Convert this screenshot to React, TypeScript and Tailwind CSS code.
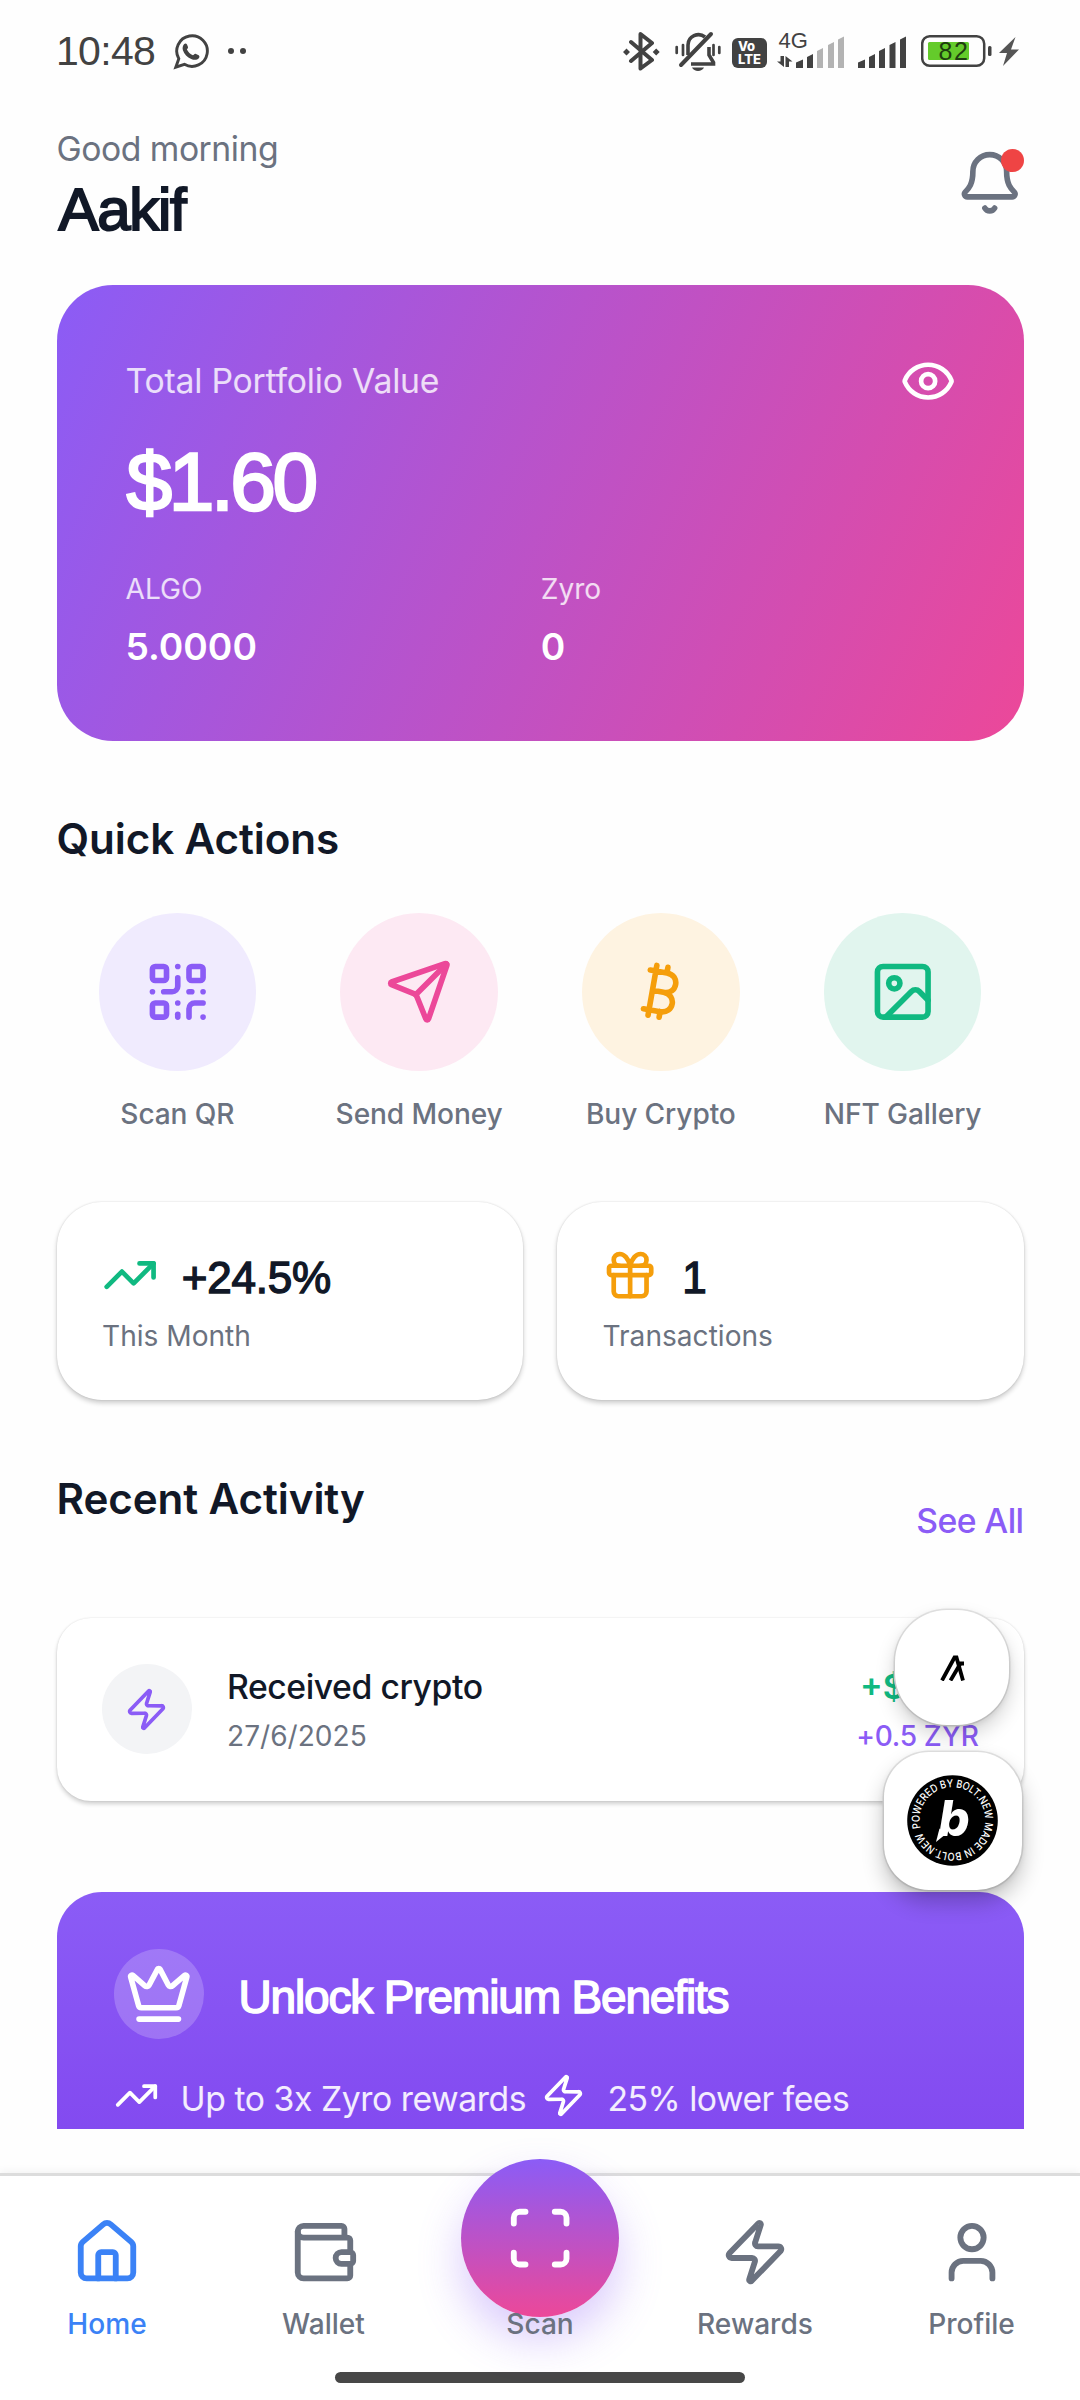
import React from 'react';
import {
  Bell,
  Bitcoin,
  Crown,
  Eye,
  Gift,
  House,
  Image,
  QrCode,
  Scan,
  Send,
  TrendingUp,
  User,
  Wallet,
  Zap,
} from 'lucide-react';

const quickActions = [
  { label: 'Scan QR', Icon: QrCode, bg: 'bg-[#f0ebfe]', color: '#8b5cf6' },
  { label: 'Send Money', Icon: Send, bg: 'bg-[#fde9f3]', color: '#ec4899' },
  { label: 'Buy Crypto', Icon: Bitcoin, bg: 'bg-[#fef3e1]', color: '#f59e0b' },
  { label: 'NFT Gallery', Icon: Image, bg: 'bg-[#e1f5ee]', color: '#10b981' },
];

const StatusBar = () => {
  return (
    <div className="flex h-[102px] shrink-0 items-center justify-between pl-[56px] pr-[61px] text-[#424242]">
      <div className="flex items-center">
        <span className="w-[116px] font-['Liberation_Sans',sans-serif] text-[41px] leading-none tracking-[-0.7px]">10:48</span>
        <svg width="38" height="38" viewBox="0 0 38 38" fill="none">
          <path d="M6.8 26.7L3.8 35.2L12.4 32.3A15.3 15.3 0 1 0 6.8 26.7Z" stroke="currentColor" strokeWidth="2.9" />
          <path
            d="M12 12.2c1-1 2.3-.9 3 .2l1 2.6c.3.9-.9 2-1.1 2.6 1.3 2.7 3.3 4.5 6 5.6.8-.4 1.6-1.8 2.6-1.5l3.2 1.5c1 .7.9 2.1.1 3-1.8 2-4.6 2.1-7.6.8-4-1.8-7-4.9-8.3-8.8-.6-2.2-.2-4.7 1.1-6z"
            fill="currentColor"
          />
        </svg>
        <div className="ml-[18px] flex gap-[6px]">
          <div className="size-[6px] rounded-full bg-[#424242]" />
          <div className="size-[6px] rounded-full bg-[#424242]" />
        </div>
      </div>

      <div className="flex items-center">
        <svg width="37" height="40" viewBox="623 31 37 40" fill="none" stroke="currentColor" strokeWidth="4">
          <path d="M631 42L652 60L640.5 68.500V34L652 43L631 61" strokeLinejoin="round" strokeLinecap="round" />
          <path d="M626.500 48.500l3.500 3.500-3.500 3.500-3.500-3.500zM656.200 48.500l3.500 3.500-3.500 3.500-3.500-3.500z" fill="currentColor" stroke="none" />
        </svg>
        <svg className="ml-[15px]" width="46" height="40" viewBox="675 32 46 40" fill="none" stroke="currentColor">
          <path d="M688 56V46a10.500 10.500 0 0 1 17-8M709 48v8l4.500 7.500v1.500H691" strokeWidth="3.600" />
          <path d="M681 66L711 35" strokeWidth="4" strokeLinecap="round" />
          <path d="M683 46v10M676.700 48v6M713.500 46v10M719.300 48v6" strokeWidth="2.700" strokeLinecap="round" />
          <path d="M692 68.500h12c-2 4.500-10 4.500-12 0z" fill="currentColor" stroke="none" />
        </svg>
        <div className="ml-[11px] mt-[3px] flex h-[30px] w-[35px] flex-col items-center justify-center rounded-[6px] bg-[#424242] font-['Inter',sans-serif] text-[13px] font-extrabold leading-[12.5px] text-white">
          <span className="-ml-[6px]">Vo</span>
          <span>LTE</span>
        </div>
        <svg className="ml-[10px] overflow-visible" width="68" height="38" viewBox="777 32 68 38" fill="currentColor">
          <text x="778.5" y="48" fontFamily="Liberation Sans, sans-serif" fontSize="22">4G</text>
          <path d="M780.500 56h3.500v11l-7-5.500h3.500zM785.500 67V56l7 5.500h-3.500V67z" />
          <path d="M796 68v-5.500l7-3V68zM807 68V57l6-3v14z" />
          <path d="M817 68V51l6-3v20zM828 68V45l6-3v26zM838 68V39.500l6-3V68z" fill="#b3b3b3" />
        </svg>
        <svg className="ml-[13px]" width="49" height="38" viewBox="858 32 49 38" fill="currentColor">
          <path d="M858 68v-5.500l7-3V68zM869 68V57l6-3v14zM879 68V51l6-3v20zM889.500 68V45l6-3v26zM900 68V39.500l6-3V68z" />
        </svg>
        <svg className="ml-[14px]" width="71" height="36" viewBox="921 34 71 36">
          <rect x="922.200" y="37.200" width="62" height="29.600" rx="7.500" fill="none" stroke="#424242" strokeWidth="2.500" />
          <rect x="928" y="43" width="41" height="18" rx="1.500" fill="#64cb2b" />
          <rect x="988" y="47" width="3.500" height="10" rx="1.500" fill="#424242" />
          <text x="938.500" y="60.500" fontFamily="Liberation Sans, sans-serif" fontSize="25" letterSpacing="1.500" fill="#1f3d10">82</text>
        </svg>
        <svg className="ml-[7px]" width="20" height="29" viewBox="0 0 20 29" fill="#555">
          <path d="M16.500 0L0 16h8L4 29L20 12.500h-8z" />
        </svg>
      </div>
    </div>
  );
};

const Header = () => {
  return (
    <div className="flex justify-between pt-[24px]">
      <div>
        <p className="text-[33.75px] leading-[46px] tracking-[-0.5px] text-[#6b7280]">Good morning</p>
        <h1 className="pl-[2px] font-['Liberation_Sans',sans-serif] text-[60px] leading-[76px] tracking-[-1.3px] [-webkit-text-stroke:2px_#111827]">
          Aakif
        </h1>
      </div>
      <div className="relative mt-[23px] size-[67.5px]">
        <Bell size={67.5} color="#6b7280" />
        <div className="absolute right-0 top-0 size-[23px] rounded-full bg-[#ef4444]" />
      </div>
    </div>
  );
};

const PortfolioCard = () => {
  return (
    <div className="mt-[37px] h-[456px] rounded-[56px] bg-[linear-gradient(115.2deg,#8b5cf6,#ec4899)] pl-[69px] pr-[67.5px] pt-[67.5px] text-white">
      <div className="flex h-[57px] items-center justify-between">
        <span className="text-[33.75px] leading-none tracking-[-0.22px] text-white/80">Total Portfolio Value</span>
        <Eye size={56.25} />
      </div>
      <p className="mt-[27px] pl-[1px] font-['Liberation_Sans',sans-serif] text-[82px] leading-[90px] tracking-[-3.4px] [-webkit-text-stroke:2.5px_white]">
        $1.60
      </p>
      <div className="mt-[42.5px] grid grid-cols-2">
        <div>
          <p className="text-[28.1px] leading-[40px] text-white/80">ALGO</p>
          <p className="mt-[16px] text-[37.2px] font-semibold leading-[44px]">5.0000</p>
        </div>
        <div>
          <p className="text-[28.1px] leading-[40px] text-white/80">Zyro</p>
          <p className="mt-[16px] text-[37.2px] font-semibold leading-[44px]">0</p>
        </div>
      </div>
    </div>
  );
};

const QuickActions = () => {
  return (
    <section className="mt-[69.5px]">
      <h2 className="text-[42.2px] font-semibold leading-[56px] tracking-[-0.1px]">Quick Actions</h2>
      <div className="mt-[46.5px] grid grid-cols-4">
        {quickActions.map(({ label, Icon, bg, color }) => (
          <div key={label} className="flex flex-col items-center">
            <div className={`flex size-[157.5px] items-center justify-center rounded-full ${bg}`}>
              <Icon size={67.5} color={color} />
            </div>
            <span className="mt-[26.5px] whitespace-nowrap text-[28.1px] font-medium leading-[34px] tracking-[-0.1px] text-[#6b7280]">
              {label}
            </span>
          </div>
        ))}
      </div>
    </section>
  );
};

const StatCard = ({ icon, value, label }: { icon: React.ReactNode; value: string; label: string }) => {
  return (
    <div className="h-[198.5px] rounded-[45px] bg-white px-[45px] pt-[45.5px] shadow-[0_3px_5px_rgba(0,0,0,0.2),0_0_2px_rgba(0,0,0,0.14)]">
      <div className="flex h-[56.25px] items-center gap-[24px]">
        {icon}
        <span className="mt-[5px] font-['Liberation_Sans',sans-serif] text-[44px] leading-none tracking-[-0.2px] [-webkit-text-stroke:1.4px_#111827]">
          {value}
        </span>
      </div>
      <p className="mt-[16px] pl-[0.5px] text-[28.1px] leading-[34px] text-[#6b7280]">{label}</p>
    </div>
  );
};

const RecentActivity = () => {
  return (
    <section className="mt-[71px]">
      <div className="flex h-[70px] items-start justify-between">
        <h2 className="text-[42.2px] font-semibold leading-[56px] tracking-[-0.1px]">Recent Activity</h2>
        <span className="mt-[30px] text-[33.75px] font-medium leading-[40px] tracking-[-0.6px] text-[#8b5cf6]">See All</span>
      </div>
      <div className="mt-[76.5px] flex h-[183.5px] items-center rounded-[34px] bg-white px-[45px] shadow-[0_3px_4px_rgba(0,0,0,0.18),0_0_2px_rgba(0,0,0,0.12)]">
        <div className="flex size-[90px] items-center justify-center rounded-full bg-[#f3f4f6]">
          <Zap size={45} color="#8b5cf6" />
        </div>
        <div className="ml-[35.5px] flex-1 pt-[6px]">
          <p className="text-[33.75px] font-medium leading-[48px] tracking-[-0.45px]">Received crypto</p>
          <p className="text-[28.1px] leading-[50px] text-[#6b7280]">27/6/2025</p>
        </div>
        <div className="pt-[6px] text-right">
          <p className="text-[33.75px] font-semibold leading-[48px] text-[#10b981]">+$0.32</p>
          <p className="text-[28.1px] font-medium leading-[50px] tracking-[-0.35px] text-[#8b5cf6]">+0.5 ZYR</p>
        </div>
      </div>
    </section>
  );
};

const PremiumCard = () => {
  return (
    <div className="mt-[91px] h-[237px] rounded-t-[45px] bg-[linear-gradient(180deg,#8b5cf6,#834af0)] px-[57px] pt-[57px] text-white">
      <div className="flex items-center">
        <div className="flex size-[90px] items-center justify-center rounded-full bg-white/20">
          <Crown size={67.5} />
        </div>
        <h3 className="ml-[35px] mt-[6px] font-['Liberation_Sans',sans-serif] text-[46px] leading-[60px] tracking-[-1.15px] [-webkit-text-stroke:1.5px_white]">
          Unlock Premium Benefits
        </h3>
      </div>
      <div className="mt-[34px] flex h-[45px] items-center whitespace-nowrap text-[33.75px] text-white/90">
        <TrendingUp size={45} color="#fff" />
        <span className="ml-[22px] mt-[6px] w-[360px] leading-none tracking-[-0.45px]">Up to 3x Zyro rewards</span>
        <Zap size={45} color="#fff" />
        <span className="ml-[22px] mt-[6px] leading-none tracking-[-0.52px]">25% lower fees</span>
      </div>
    </div>
  );
};

const FloatingBadges = () => {
  return (
    <div className="absolute left-[884px] top-[1610px] flex w-[138px] flex-col">
      <div className="ml-[11px] flex h-[115px] w-[114px] items-center justify-center rounded-[52px] bg-white shadow-[0_10px_20px_rgba(0,0,0,0.18),0_2px_6px_rgba(0,0,0,0.1),0_0_0_1.5px_#e8e8e8]">
        <svg width="25" height="26" viewBox="0 0 25 26" fill="none" stroke="#000" strokeWidth="3.800">
          <path d="M2 25.500L14.500 2.500H16.500L23 25.500" />
          <path d="M10.500 25.500L20.500 8.500H24" />
        </svg>
      </div>
      <div className="mt-[27px] flex size-[138px] items-center justify-center rounded-[45px] bg-white shadow-[0_12px_22px_rgba(0,0,0,0.24),0_2px_6px_rgba(0,0,0,0.1),0_0_0_1.5px_#e8e8e8]">
        <svg className="-ml-[2px] -mt-[1px]" width="91" height="91" viewBox="-45.5 -45.500 91 91">
          <defs>
            <path id="ring" d="M-32 7.600A32.900 32.900 0 1 1 -31.700 8.700" />
          </defs>
          <circle r="45.300" />
          <text fontFamily="Inter, sans-serif" fontSize="10.800" fontWeight="500" fill="#fff">
            <textPath href="#ring" textLength="202" lengthAdjust="spacingAndGlyphs">POWERED BY BOLT.NEW MADE IN BOLT.NEW</textPath>
          </text>
          <text x="-14" y="15.500" fontFamily="Inter, sans-serif" fontSize="49" fontWeight="800" fontStyle="italic" fill="#fff">b</text>
          <path d="M-13 8L-16.500 21.500L-6 13z" fill="#fff" />
        </svg>
      </div>
    </div>
  );
};

const NavItem = ({ icon, label, active }: { icon: React.ReactNode; label: string; active?: boolean }) => {
  return (
    <div className={`flex flex-col items-center pt-[41px] ${active ? 'text-[#3b82f6]' : 'text-[#6b7280]'}`}>
      <div className="flex size-[70px] items-center justify-center">{icon}</div>
      <span className="relative mt-[20px] text-[28.1px] font-medium leading-[34px]">{label}</span>
    </div>
  );
};

const BottomNav = () => {
  return (
    <nav className="relative mt-[44px] h-[227px] border-t-[3px] border-[#dcdcdc] bg-white shadow-[0_-2px_8px_rgba(0,0,0,0.05)]">
      <div className="grid grid-cols-[214px_219px_214px_216px_217px]">
        <NavItem icon={<House size={70.3} />} label="Home" active />
        <NavItem icon={<Wallet size={70.3} />} label="Wallet" />
        <NavItem
          icon={
            <div className="-mt-[28px] flex size-[157.5px] shrink-0 items-center justify-center rounded-full bg-[linear-gradient(180deg,#8b5cf6,#ec4899)] shadow-[0_22px_44px_rgba(139,92,246,0.32)]">
              <Scan size={70.3} color="#fff" />
            </div>
          }
          label="Scan"
        />
        <NavItem icon={<Zap size={70.3} />} label="Rewards" />
        <NavItem icon={<User size={70.3} />} label="Profile" />
      </div>
      <div className="mx-auto mt-[31px] h-[11px] w-[410px] rounded-full bg-[#474747]" />
    </nav>
  );
};

export default function App() {
  return (
    <div className="relative h-[2400px] w-[1080px] overflow-hidden bg-[#fefefe] font-['Inter',sans-serif] text-[#111827]">
      <StatusBar />
      <main className="px-[56.5px]">
        <Header />
        <PortfolioCard />
        <QuickActions />
        <div className="mt-[70.5px] grid grid-cols-2 gap-[34px]">
          <StatCard icon={<TrendingUp size={56.25} color="#10b981" />} value="+24.5%" label="This Month" />
          <StatCard icon={<Gift size={56.25} color="#f59e0b" />} value="1" label="Transactions" />
        </div>
        <RecentActivity />
        <PremiumCard />
      </main>
      <BottomNav />
      <FloatingBadges />
    </div>
  );
}
